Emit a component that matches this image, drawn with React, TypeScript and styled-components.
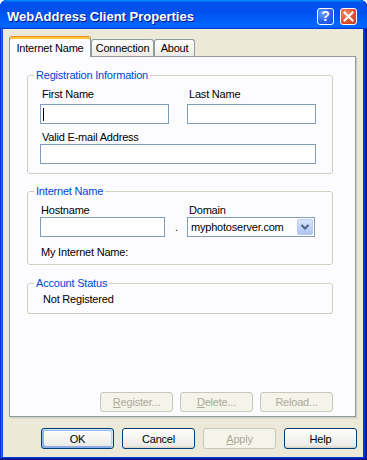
import React from 'react';
import styled, { createGlobalStyle } from 'styled-components';

const GlobalStyle = createGlobalStyle`
  html, body {
    margin: 0;
    padding: 0;
    background: #ffffff;
  }
  body {
    font-family: "Liberation Sans", Arial, sans-serif;
    font-size: 11px;
    letter-spacing: -0.2px;
    color: #000;
  }
  * {
    box-sizing: border-box;
  }
`;

const Window = styled.div`
  width: 367px;
  height: 460px;
  display: flex;
  flex-direction: column;
  background: #0831d9;
  border-radius: 7px 7px 0 0;
  overflow: hidden;
  box-shadow: inset -1px -1px #00138c, inset 1px 1px #0831d9, inset -2px -2px #001ea0,
    inset 2px 2px #166aee, inset -3px -3px #003bda, inset 3px 3px #0855dd;
`;

const TitleBar = styled.div`
  flex: none;
  height: 29px;
  display: flex;
  align-items: center;
  padding: 3px 10px 0 7px;
  background: linear-gradient(
    180deg,
    #0997ff,
    #0053ee 8%,
    #0050ee 40%,
    #06f 88%,
    #06f 93%,
    #005bff 95%,
    #003dd7 96%,
    #003dd7
  );
  border-radius: 7px 7px 0 0;
`;

const Title = styled.div`
  flex: 1;
  color: #fff;
  font-weight: bold;
  font-size: 13px;
  letter-spacing: 0;
  text-shadow: 1px 1px #0f1089;
  white-space: nowrap;
`;

const CaptionButton = styled.div<{ $close?: boolean }>`
  width: 17px;
  height: 17px;
  margin-left: 6px;
  border: 1px solid #fff;
  border-radius: 3px;
  display: flex;
  align-items: center;
  justify-content: center;
  color: #fff;
  font-weight: bold;
  font-size: 14px;
  letter-spacing: 0;
  background: ${(p) =>
    p.$close
      ? 'radial-gradient(circle at 30% 30%, #f08a66, #e0532a 55%, #c63a12)'
      : 'radial-gradient(circle at 30% 30%, #6c9cff, #2860f0 55%, #1a48d8)'};
`;

const Frame = styled.div`
  flex: 1;
  margin: 0 4px 3px 3px;
  background: #ece9d8;
  padding: 7px 6px 0 6px;
  display: flex;
  flex-direction: column;
`;

const TabStrip = styled.div`
  height: 20px;
  display: flex;
  align-items: flex-end;
`;

const Tab = styled.div<{ $w: number; $active?: boolean }>`
  width: ${(p) => p.$w}px;
  height: ${(p) => (p.$active ? 21 : 17)}px;
  margin-bottom: ${(p) => (p.$active ? -1 : 0)}px;
  position: relative;
  z-index: ${(p) => (p.$active ? 2 : 1)};
  display: flex;
  align-items: center;
  justify-content: center;
  padding-top: ${(p) => (p.$active ? 1 : 0)}px;
  border: 1px solid #919b9c;
  border-bottom: none;
  border-top-color: ${(p) => (p.$active ? '#e68b2c' : '#919b9c')};
  border-radius: 3px 3px 0 0;
  background: ${(p) => (p.$active ? '#fcfcfe' : 'linear-gradient(180deg, #fff, #fafaf9 30%, #ecebe6)')};
  box-shadow: ${(p) => (p.$active ? 'inset 0 2px #ffc73c' : 'none')};
`;

const Panel = styled.div`
  width: 347px;
  height: 361px;
  border: 1px solid #919b9c;
  background: #fcfcfe;
  box-shadow: 1px 1px 0 #d0cebf, 2px 2px 0 #e2dfd2;
  padding: 11px 22px 4px 17px;
  display: flex;
  flex-direction: column;
`;

const Group = styled.fieldset<{ $pt: number; $pb: number; $mt?: number }>`
  margin: ${(p) => p.$mt || 0}px 0 0 0;
  width: 306px;
  min-width: 0;
  border: 1px solid #d0d0bf;
  border-radius: 3px;
  padding: ${(p) => p.$pt}px 12px ${(p) => p.$pb}px 12px;
`;

const Legend = styled.legend`
  color: #0046d5;
  line-height: 14px;
  padding: 0 2px;
  margin-left: -6px;
`;

const RegGrid = styled.div`
  display: grid;
  grid-template-columns: 129px 129px;
  column-gap: 18px;
`;

const Label = styled.div<{ $mt?: number; $mb?: number; $indent?: number; $span?: boolean }>`
  line-height: 13px;
  height: 13px;
  white-space: nowrap;
  padding-left: ${(p) => (p.$indent ?? 2)}px;
  margin-top: ${(p) => p.$mt || 0}px;
  margin-bottom: ${(p) => p.$mb || 0}px;
  grid-column: ${(p) => (p.$span ? '1 / span 2' : 'auto')};
`;

const TextBox = styled.div<{ $span?: boolean }>`
  height: 20px;
  border: 1px solid #7f9db9;
  background: #fff;
  display: flex;
  align-items: center;
  padding-left: 2px;
  grid-column: ${(p) => (p.$span ? '1 / span 2' : 'auto')};
`;

const Caret = styled.span`
  width: 1px;
  height: 13px;
  background: #000;
`;

const NameRow = styled.div`
  display: flex;
  align-items: flex-end;
`;

const Field = styled.div<{ $w: number }>`
  width: ${(p) => p.$w}px;
  display: flex;
  flex-direction: column;
`;

const Dot = styled.div`
  width: 22px;
  height: 20px;
  line-height: 20px;
  padding-left: 10px;
`;

const Combo = styled.div`
  height: 20px;
  border: 1px solid #7f9db9;
  background: #fff;
  display: flex;
  align-items: center;
  padding: 1px;
`;

const ComboText = styled.div`
  flex: 1;
  padding-left: 2px;
`;

const DropButton = styled.div`
  width: 16px;
  height: 16px;
  border: 1px solid #bacaee;
  border-radius: 2px;
  background: linear-gradient(180deg, #dce6fd, #c1d3fb 50%, #b0c5f4);
  display: flex;
  align-items: center;
  justify-content: center;
`;

const Spacer = styled.div`
  flex: 1;
`;

const ButtonRow = styled.div<{ $gap: number; $mt?: number }>`
  display: flex;
  justify-content: flex-end;
  gap: ${(p) => p.$gap}px;
  margin-top: ${(p) => p.$mt || 0}px;
`;

const Button = styled.button<{ $default?: boolean; $h?: number }>`
  width: 73px;
  height: ${(p) => p.$h || 21}px;
  padding: 0;
  font-family: "Liberation Sans", Arial, sans-serif;
  font-size: 11px;
  letter-spacing: -0.2px;
  color: #000;
  border: 1px solid #003c74;
  border-radius: 3px;
  background: linear-gradient(180deg, #fff, #ecebe6 86%, #d6d0c5);
  box-shadow: ${(p) =>
    p.$default
      ? 'inset -1px 1px #cee7ff, inset 1px 2px #98b8ea, inset -2px 2px #bcd4f6, inset 1px -1px #89ade4, inset 2px -2px #89ade4'
      : 'none'};

  &:disabled {
    color: #aca899;
    border-color: #c9c7ba;
    background: #f5f4ea;
    box-shadow: none;
  }
`;

const App = () => {
  return (
    <>
      <GlobalStyle />
      <Window>
        <TitleBar>
          <Title>WebAddress Client Properties</Title>
          <CaptionButton>?</CaptionButton>
          <CaptionButton $close>
            <svg width="11" height="11" viewBox="0 0 11 11">
              <path d="M1.5 1.5 L9.5 9.5 M9.5 1.5 L1.5 9.5" stroke="#fff" strokeWidth="2" strokeLinecap="square" />
            </svg>
          </CaptionButton>
        </TitleBar>
        <Frame>
          <TabStrip>
            <Tab $w={82} $active>Internet Name</Tab>
            <Tab $w={63}>Connection</Tab>
            <Tab $w={41}>About</Tab>
          </TabStrip>
          <Panel>
            <Group $pt={6} $pb={9}>
              <Legend>Registration Information</Legend>
              <RegGrid>
                <Label $mb={3}>First Name</Label>
                <Label $mb={3}>Last Name</Label>
                <TextBox>
                  <Caret />
                </TextBox>
                <TextBox />
                <Label $span $mt={7}>Valid E-mail Address</Label>
                <TextBox $span />
              </RegGrid>
            </Group>

            <Group $pt={6} $pb={5} $mt={10}>
              <Legend>Internet Name</Legend>
              <NameRow>
                <Field $w={125}>
                  <Label $indent={1}>Hostname</Label>
                  <TextBox />
                </Field>
                <Dot>.</Dot>
                <Field $w={128}>
                  <Label $indent={2}>Domain</Label>
                  <Combo>
                    <ComboText>myphotoserver.com</ComboText>
                    <DropButton>
                      <svg width="10" height="8" viewBox="0 0 10 8">
                        <path d="M1.5 2 L5 5.5 L8.5 2" stroke="#4d6185" strokeWidth="2" fill="none" />
                      </svg>
                    </DropButton>
                  </Combo>
                </Field>
              </NameRow>
              <Label $mt={9} $indent={1}>My Internet Name:</Label>
            </Group>

            <Group $pt={3} $pb={7} $mt={11}>
              <Legend>Account Status</Legend>
              <Label $indent={3}>Not Registered</Label>
            </Group>

            <Spacer />
            <ButtonRow $gap={7}>
              <Button $h={20} disabled>
                <u>R</u>egister...
              </Button>
              <Button $h={20} disabled>
                <u>D</u>elete...
              </Button>
              <Button $h={20} disabled>
                Reload...
              </Button>
            </ButtonRow>
          </Panel>
          <ButtonRow $gap={8} $mt={11}>
            <Button $default>OK</Button>
            <Button>Cancel</Button>
            <Button disabled>
              <u>A</u>pply
            </Button>
            <Button>Help</Button>
          </ButtonRow>
        </Frame>
      </Window>
    </>
  );
};

export default App;
